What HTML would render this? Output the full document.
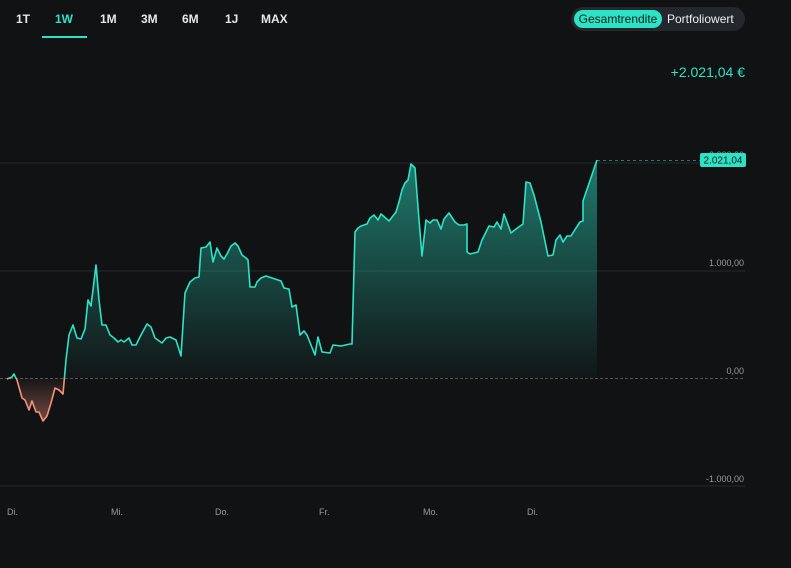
<!DOCTYPE html>
<html><head><meta charset="utf-8"><style>
html,body{margin:0;padding:0;background:#111214;width:791px;height:568px;overflow:hidden;font-family:"Liberation Sans",sans-serif}
.tab{position:absolute;top:12px;color:#e8e8e8;font-size:12px;font-weight:bold}
.ul{position:absolute;left:42px;top:36px;width:45px;height:2px;background:#2de3c6}
.tog{position:absolute;left:571px;top:7px;width:174px;height:24px;border-radius:12px;background:#24272b}
.on{position:absolute;left:3px;top:3px;width:88px;height:18px;border-radius:9px;background:#2de3c6;color:#0b1f1b;font-size:12px;line-height:18px;text-align:center}
.off{position:absolute;left:96px;top:3px;color:#f0f0f0;font-size:12px;line-height:18px}
.val{position:absolute;right:46px;top:64px;color:#2de3c6;font-size:14px}
</style></head><body>
<div class="tab" style="left:16px">1T</div>
<div class="tab" style="left:55px;color:#2de3c6">1W</div>
<div class="tab" style="left:100px">1M</div>
<div class="tab" style="left:141px">3M</div>
<div class="tab" style="left:182px">6M</div>
<div class="tab" style="left:225px">1J</div>
<div class="tab" style="left:261px">MAX</div>
<div class="ul"></div>
<div class="tog"><div class="on">Gesamtrendite</div><div class="off">Portfoliowert</div></div>
<div class="val">+2.021,04 €</div>
<svg width="791" height="568" style="position:absolute;left:0;top:0" font-family="Liberation Sans, sans-serif">
<defs>
<linearGradient id="gp" x1="0" y1="160" x2="0" y2="378" gradientUnits="userSpaceOnUse"><stop offset="0" stop-color="#2de3c6" stop-opacity="0.5"/><stop offset="1" stop-color="#2de3c6" stop-opacity="0.02"/></linearGradient>
<linearGradient id="gn" x1="0" y1="378" x2="0" y2="422" gradientUnits="userSpaceOnUse"><stop offset="0" stop-color="#f2937a" stop-opacity="0.02"/><stop offset="1" stop-color="#f2937a" stop-opacity="0.45"/></linearGradient>
<clipPath id="cp"><rect x="0" y="0" width="791" height="378"/></clipPath>
<clipPath id="cn"><rect x="0" y="378" width="791" height="200"/></clipPath>
<path id="area" d="M7,379 L12,377 14,374 17,380 22,398 25,400 29,410 32,401 36,412 39,412 43,421 47,416 51,403 55,388 59,390 63,394 66,360 69,335 73,325 77,338 81,339 85,329 88,300 91,306 96,265 99,300 102,325 106,325 110,335 114,338 118,342 121,340 124,342 129,338 132,345 136,345 141,335 147,324 151,327 155,338 162,343 166,338 170,337 176,340 181,356 185,293 190,282 195,278 199,277 201,248 206,247 210,242 213,262 217,248 221,256 224,259 227,254 231,246 235,243 238,246 242,255 246,258 248,260 250,287 255,287 257,282 261,278 266,276 281,281 284,288 289,289 292,307 296,305 300,335 304,331 307,335 315,355 318,337 322,352 330,353 333,345 341,346 350,344 352,344 355,232 358,228 361,226 367,224 370,218 374,215 378,220 381,214 389,221 396,212 399,202 402,190 405,183 408,180 411,164 415,168 419,220 422,256 426,220 430,223 433,220 437,220 441,229 444,219 449,213 455,222 459,225 464,225 467,224 467,252 470,254 478,252 482,240 489,226 494,227 497,222 501,229 504,214 511,233 516,229 523,224 526,182 530,183 534,195 541,222 548,256 553,255 556,240 560,235 563,242 567,236 571,236 576,228 580,222 583,221 583,201 597,160 L597,378 L7,378 Z"/>
<path id="ln" d="M7,379 L12,377 14,374 17,380 22,398 25,400 29,410 32,401 36,412 39,412 43,421 47,416 51,403 55,388 59,390 63,394 66,360 69,335 73,325 77,338 81,339 85,329 88,300 91,306 96,265 99,300 102,325 106,325 110,335 114,338 118,342 121,340 124,342 129,338 132,345 136,345 141,335 147,324 151,327 155,338 162,343 166,338 170,337 176,340 181,356 185,293 190,282 195,278 199,277 201,248 206,247 210,242 213,262 217,248 221,256 224,259 227,254 231,246 235,243 238,246 242,255 246,258 248,260 250,287 255,287 257,282 261,278 266,276 281,281 284,288 289,289 292,307 296,305 300,335 304,331 307,335 315,355 318,337 322,352 330,353 333,345 341,346 350,344 352,344 355,232 358,228 361,226 367,224 370,218 374,215 378,220 381,214 389,221 396,212 399,202 402,190 405,183 408,180 411,164 415,168 419,220 422,256 426,220 430,223 433,220 437,220 441,229 444,219 449,213 455,222 459,225 464,225 467,224 467,252 470,254 478,252 482,240 489,226 494,227 497,222 501,229 504,214 511,233 516,229 523,224 526,182 530,183 534,195 541,222 548,256 553,255 556,240 560,235 563,242 567,236 571,236 576,228 580,222 583,221 583,201 597,160" fill="none" stroke-width="1.6" stroke-linejoin="round"/>
</defs>
<g stroke="#1f2225" stroke-width="1.5">
<line x1="0" y1="163" x2="745" y2="163"/><line x1="0" y1="271" x2="745" y2="271"/><line x1="0" y1="486" x2="745" y2="486"/>
</g>
<line x1="0" y1="378.5" x2="745" y2="378.5" stroke="#555" stroke-dasharray="3,2"/>
<line x1="597" y1="160.5" x2="700" y2="160.5" stroke="#2a7a6c" stroke-dasharray="3,3"/>
<g font-size="9" fill="#9a9a9a" text-anchor="end">
<text x="744" y="158">2.000,00</text><text x="744" y="266">1.000,00</text><text x="744" y="374">0,00</text><text x="744" y="482">-1.000,00</text>
</g>
<rect x="700" y="153" width="46" height="14" rx="2" fill="#2de3c6"/>
<text x="723" y="163.5" font-size="10" fill="#0b1f1b" text-anchor="middle">2.021,04</text>
<g font-size="9" fill="#9a9a9a">
<text x="7" y="515">Di.</text><text x="111" y="515">Mi.</text><text x="215" y="515">Do.</text><text x="319" y="515">Fr.</text><text x="423" y="515">Mo.</text><text x="527" y="515">Di.</text>
</g>
<use href="#area" fill="url(#gp)" clip-path="url(#cp)"/>
<use href="#area" fill="url(#gn)" clip-path="url(#cn)"/>
<use href="#ln" stroke="#2de3c6" clip-path="url(#cp)"/>
<use href="#ln" stroke="#f2937a" clip-path="url(#cn)"/>
</svg>
</body></html>
